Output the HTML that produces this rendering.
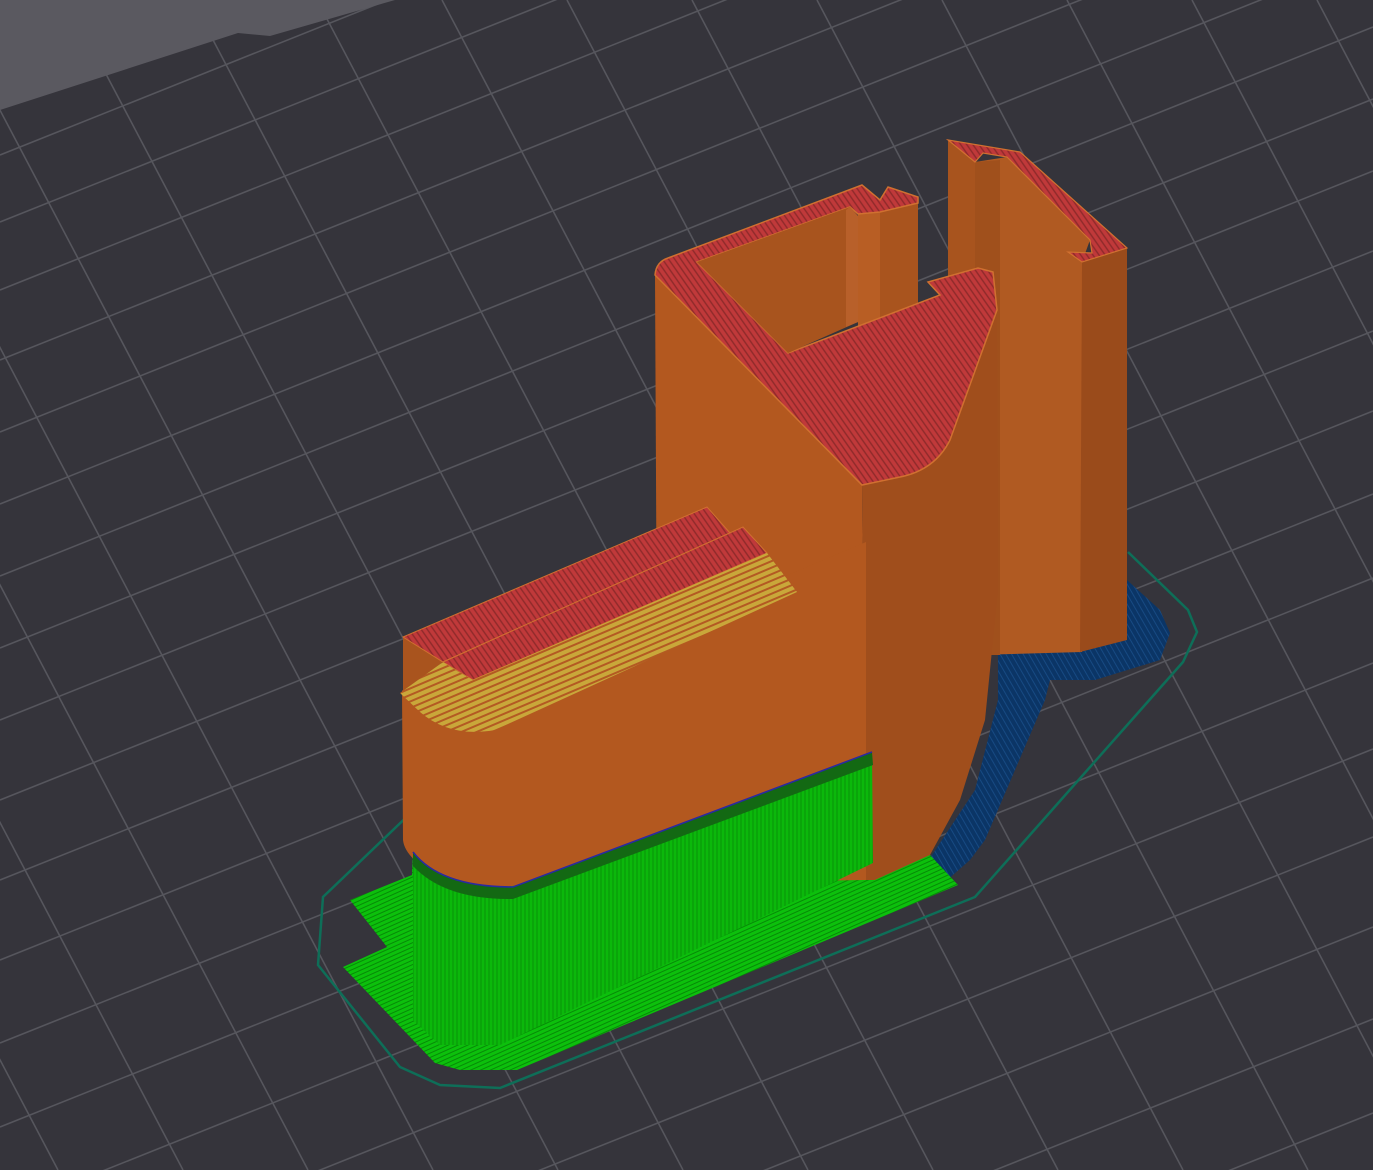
<!DOCTYPE html>
<html><head><meta charset="utf-8"><style>
html,body{margin:0;padding:0;background:#35343b;overflow:hidden;width:1373px;height:1170px}
svg{display:block;position:absolute;left:0;top:0;overflow:hidden}
</style></head><body>
<svg width="1373" height="1170" viewBox="0 0 1373 1170" xmlns="http://www.w3.org/2000/svg">
<defs>
<pattern id="redl" width="5" height="5" patternUnits="userSpaceOnUse" patternTransform="rotate(55)">
<rect width="5" height="5" fill="#c0393a"/><line x1="0" y1="1" x2="5" y2="1" stroke="#8e2a2a" stroke-width="1.4"/>
</pattern>
<pattern id="yel" width="6" height="6" patternUnits="userSpaceOnUse" patternTransform="rotate(-23)">
<rect width="6" height="6" fill="#c9a73a"/><line x1="0" y1="2" x2="6" y2="2" stroke="#b35a22" stroke-width="2"/>
</pattern>
<pattern id="grn" width="4" height="4" patternUnits="userSpaceOnUse" patternTransform="rotate(-24)">
<rect width="4" height="4" fill="#0cc00c"/><line x1="0" y1="1" x2="4" y2="1" stroke="#078a07" stroke-width="1"/>
</pattern>
<pattern id="grnv" width="4" height="4" patternUnits="userSpaceOnUse">
<rect width="4" height="4" fill="#0bb80b"/><line x1="1" y1="0" x2="1" y2="4" stroke="#089208" stroke-width="1"/>
</pattern>
<pattern id="blu" width="5" height="5" patternUnits="userSpaceOnUse" patternTransform="rotate(60)">
<rect width="5" height="5" fill="#0b3566"/><line x1="0" y1="1" x2="5" y2="1" stroke="#1a4f8a" stroke-width="0.8"/>
</pattern>
</defs>
<rect width="1373" height="1170" fill="#35343b"/>
<g stroke="#56565d" stroke-width="1.6">
<line x1="0" y1="18" x2="1373" y2="-531"/><line x1="0" y1="88" x2="1373" y2="-461"/><line x1="0" y1="155" x2="1373" y2="-394"/><line x1="0" y1="222" x2="1373" y2="-327"/><line x1="0" y1="290" x2="1373" y2="-259"/><line x1="0" y1="360" x2="1373" y2="-189"/><line x1="0" y1="432" x2="1373" y2="-117"/><line x1="0" y1="504" x2="1373" y2="-45"/><line x1="0" y1="576" x2="1373" y2="27"/><line x1="0" y1="648" x2="1373" y2="99"/><line x1="0" y1="720" x2="1373" y2="171"/><line x1="0" y1="800" x2="1373" y2="251"/><line x1="0" y1="880" x2="1373" y2="331"/><line x1="0" y1="960" x2="1373" y2="411"/><line x1="0" y1="1043" x2="1373" y2="494"/><line x1="0" y1="1127" x2="1373" y2="578"/><line x1="0" y1="1212" x2="1373" y2="663"/><line x1="0" y1="1298" x2="1373" y2="749"/><line x1="0" y1="1386" x2="1373" y2="837"/><line x1="0" y1="1476" x2="1373" y2="927"/><line x1="0" y1="1568" x2="1373" y2="1019"/><line x1="0" y1="1662" x2="1373" y2="1113"/><line x1="0" y1="1758" x2="1373" y2="1209"/>
<line x1="-558" y1="0" x2="58" y2="1170"/><line x1="-433" y1="0" x2="183" y2="1170"/><line x1="-308" y1="0" x2="308" y2="1170"/><line x1="-183" y1="0" x2="433" y2="1170"/><line x1="-58" y1="0" x2="558" y2="1170"/><line x1="67" y1="0" x2="683" y2="1170"/><line x1="192" y1="0" x2="808" y2="1170"/><line x1="317" y1="0" x2="933" y2="1170"/><line x1="442" y1="0" x2="1058" y2="1170"/><line x1="567" y1="0" x2="1183" y2="1170"/><line x1="692" y1="0" x2="1308" y2="1170"/><line x1="817" y1="0" x2="1433" y2="1170"/><line x1="942" y1="0" x2="1558" y2="1170"/><line x1="1067" y1="0" x2="1683" y2="1170"/><line x1="1192" y1="0" x2="1808" y2="1170"/><line x1="1317" y1="0" x2="1933" y2="1170"/>
</g>
<polygon points="0,0 395,0 270,36 238,33 0,110" fill="#5a5960"/>
<polyline points="417,807 323,897 318,965 400,1067 440,1085 500,1088 975,897 1183,662 1197,632 1188,610 1128,552" fill="none" stroke="#0e6e58" stroke-width="2.5"/>
<polygon points="998,543 1063,600 1078,650 1125,635 1127,580 1160,610 1170,633 1160,660 1095,680 1050,680 1045,700 985,840 970,860 945,882 930,858 975,790 998,700" fill="url(#blu)"/>
<polygon points="350,900 412,875 413,852 872,755 872,875 930,855 958,885 517,1070 460,1070 435,1063 343,967 387,947" fill="url(#grn)"/>
<polygon points="948,140 975,162 975,655 948,640" fill="#a8541e"/>
<polygon points="975,162 1007,157 1090,240 1082,262 1082,652 975,655" fill="#b05a22"/>
<polygon points="975,162 1000,160 1000,655 975,655" fill="#a0501c"/>
<polygon points="1082,262 1127,248 1127,640 1080,652" fill="#9a4b1b"/>
<polygon points="948,140 1020,152 1127,248 1082,262 1068,252 1092,253 1090,240 1007,157 983,153 975,162" fill="url(#redl)" stroke="#d07030" stroke-width="1.2"/>
<polygon points="655,275 862,485 866,880 658,880" fill="#b3581f"/>
<polygon points="862,485 900,477 950,440 997,310 998,590 985,720 960,800 930,855 875,880 866,880" fill="#a04e1c"/>
<polygon points="858,200 918,197 918,330 858,330" fill="#a9541e"/>
<polygon points="858,205 880,205 880,330 858,330" fill="#b85e24"/>
<path d="M655,275 Q656,262 668,258 L862,185 L880,200 L888,187 L918,197 L918,203 L880,212 L858,214 L850,207 L697,262 L788,353 L940,295 L928,282 L978,268 L993,272 L997,310 L950,440 Q935,470 900,477 L862,485 Z" fill="url(#redl)" stroke="#d07030" stroke-width="1.5"/>
<polygon points="697,262 850,207 858,216 858,322 788,353" fill="#a8541e"/>
<polygon points="850,207 858,216 858,322 846,327 846,210" fill="#b8602a"/>
<polygon points="403,637 443,662 403,693" fill="#a9541e"/>
<path d="M402,690 L440,722 L866,542 L866,880 L520,885 Q470,892 445,880 Q405,860 403,840 Z" fill="#b3581f"/>
<polygon points="403,637 707,507 730,533 443,662" fill="url(#redl)" stroke="#d07030" stroke-width="1"/>
<polygon points="443,662 743,527 767,553 473,680" fill="url(#redl)" stroke="#d07030" stroke-width="1"/>
<path d="M400,693 L443,662 Q458,672 473,680 L767,553 L797,592 L495,730 Q450,738 420,712 Z" fill="url(#yel)"/>
<path d="M413,852 Q440,887 513,887 L872,752 L873,863 L500,1045 L440,1045 L413,1020 Z" fill="url(#grnv)"/>
<path d="M413,852 Q440,887 513,887 L872,752 L873,765 L513,899 Q445,900 413,866 Z" fill="#136913"/>
<path d="M413,852 Q440,887 513,887 L872,752" fill="none" stroke="#2a2aa0" stroke-width="1.6"/>
</svg>
</body></html>
